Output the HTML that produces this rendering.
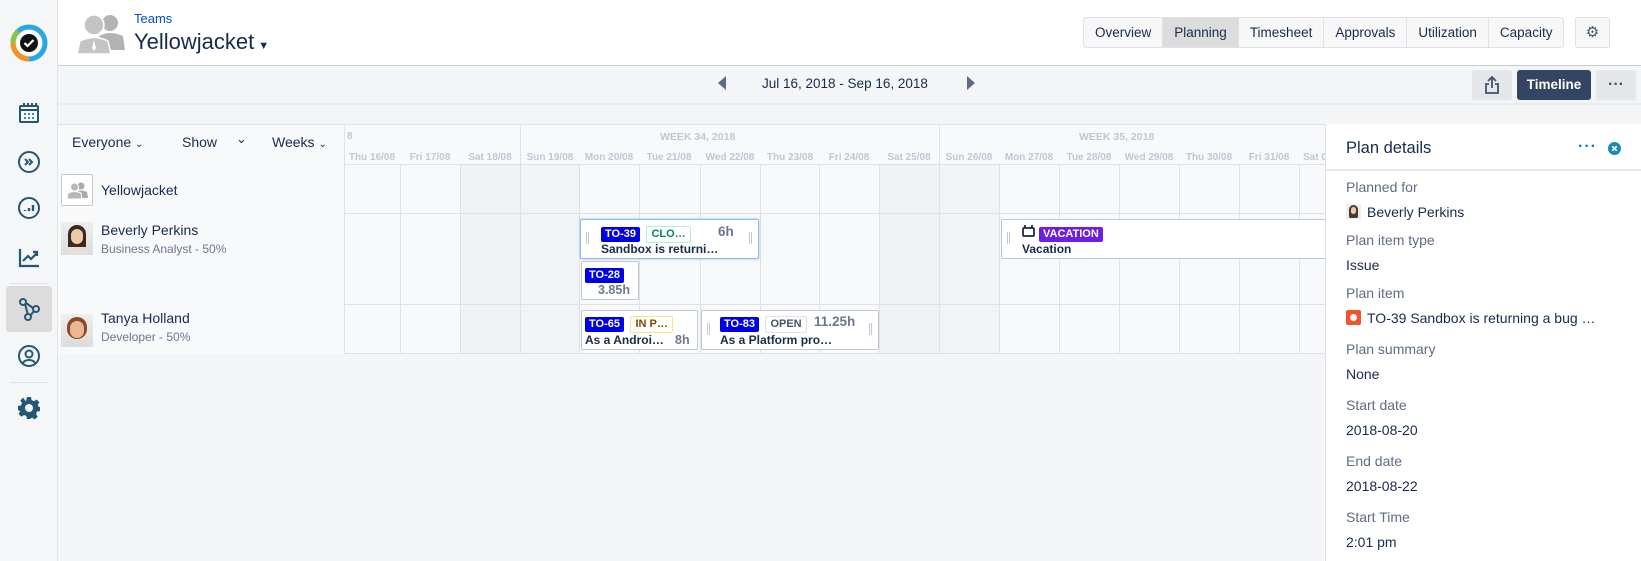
<!DOCTYPE html>
<html><head><meta charset="utf-8"><style>
*{box-sizing:border-box;margin:0;padding:0}
body{width:1641px;height:561px;overflow:hidden;background:#f4f5f7;font-family:"Liberation Sans",Arial,sans-serif;color:#172b4d;position:relative}
.a{position:absolute}
.side{left:0;top:0;width:58px;height:561px;background:#f4f6f8;border-right:1px solid #e1e4e8}
.ic{position:absolute;left:17px;width:24px;height:24px}
.hdr{left:58px;top:0;width:1583px;height:66px;background:#fff;border-bottom:1px solid #c9ccd1}
.tabs{left:1083px;top:17px;height:31px;display:flex;border:1px solid #dfe1e6;border-radius:3px;background:#f7f7f7}
.tabs div{padding:0 11px;line-height:29px;font-size:13.5px;border-right:1px solid #dfe1e6;color:#172b4d}
.tabs div.on{background:#dcdcdc}
.btn{border-radius:3px;background:#e4e6ea;height:30px;top:70px}
.grid{left:58px;top:124px;width:1267px;height:229px;background:#f8f9fb;border-top:1px solid #dfe1e6}
.col{position:absolute;top:40px;bottom:0;border-left:1px solid #dfe1e6}
.dl{position:absolute;top:27px;font-size:10px;font-weight:bold;color:#c1c7d0;width:60px;text-align:center}
.hl{position:absolute;left:0;height:1px;background:#dfe1e6}
.card{position:absolute;background:#fff;border:1px solid #c1c7d0;border-radius:2px}
.tag{display:inline-block;font-size:11px;font-weight:bold;border-radius:2px;padding:1px 4px;line-height:13px}
.blue{background:#0000e6;color:#fff}
.b{font-size:12px;font-weight:bold;color:#172b4d}
.h{font-weight:bold;color:#6b778c;font-size:13px}
.grip{position:absolute;top:12px;width:3px;height:12px;border-left:1px solid #c1c7d0;border-right:1px solid #c1c7d0}
.panel{left:1325px;top:124px;width:316px;height:437px;background:#fff;border-left:1px solid #dfe1e6}
.lb{position:absolute;left:20px;font-size:14px;color:#5e6c84}
.vl{position:absolute;left:20px;font-size:14px;color:#172b4d}
</style></head><body>
<div class="a side">
  <svg class="a" style="left:10px;top:24px" width="38" height="38" viewBox="0 0 38 38"><circle cx="19" cy="19" r="16" fill="none" stroke="#29a8e0" stroke-width="5"/><path d="M19 35 A16 16 0 0 1 3 19" fill="none" stroke="#f7931e" stroke-width="5"/><path d="M3 19 A16 16 0 0 1 8 7" fill="none" stroke="#8dc63f" stroke-width="5"/><circle cx="19" cy="19" r="12" fill="#fff"/><circle cx="19" cy="19" r="9" fill="#111"/><path d="M14.5 19 l3 3 l6-6" fill="none" stroke="#fff" stroke-width="2.2"/></svg>
  <svg class="ic" style="top:101px" viewBox="0 0 24 24" fill="none" stroke="#245872" stroke-width="2"><rect x="3" y="5" width="18" height="16" rx="1"/><path d="M3 9h18M7 2v4M11 2v4M15 2v4M19 2v4"/><path d="M7 13h2M11 13h2M15 13h2M7 17h2M11 17h2M15 17h2" stroke-width="1.6"/></svg>
  <svg class="ic" style="top:150px" viewBox="0 0 24 24" fill="none" stroke="#245872" stroke-width="2"><circle cx="12" cy="12" r="10"/><path d="M8 9l3 3-3 3M12 9l3 3-3 3"/></svg>
  <svg class="ic" style="top:196px" viewBox="0 0 24 24" fill="none" stroke="#245872" stroke-width="2"><circle cx="12" cy="12" r="10"/><path d="M8 15v-1M12 15v-3M16 15v-6" stroke-width="2.4"/></svg>
  <svg class="ic" style="top:245px" viewBox="0 0 24 24" fill="none" stroke="#245872" stroke-width="2.2"><path d="M3 4v17h19"/><path d="M6 16l5-5 3 3 6-6M16 7h4v4"/></svg>
  <div class="a" style="left:10px;top:283px;width:38px;height:1px;background:#dfe1e6"></div>
  <div class="a" style="left:6px;top:286px;width:46px;height:46px;background:#dcdcdc;border-radius:3px"></div>
  <svg class="ic" style="top:297px" viewBox="0 0 24 24" fill="none" stroke="#245872" stroke-width="2"><circle cx="6" cy="5" r="3"/><circle cx="19" cy="12" r="3"/><circle cx="11" cy="20" r="3"/><path d="M8 7l3 11M9 6l7 5M13 19l4-5"/></svg>
  <svg class="ic" style="top:344px" viewBox="0 0 24 24" fill="none" stroke="#245872" stroke-width="2"><circle cx="12" cy="12" r="10"/><circle cx="12" cy="10" r="3.5"/><path d="M6 19c2-4 10-4 12 0"/></svg>
  <div class="a" style="left:10px;top:382px;width:38px;height:1px;background:#dfe1e6"></div>
  <svg class="ic" style="top:396px" viewBox="0 0 24 24"><path fill="#245872" d="M10 1h4l.6 3 2.4 1.2 2.6-1.7 2.8 2.8-1.7 2.6L21.9 11 23 11v4l-3 .6-1 2.4 1.7 2.6-2.8 2.8-2.6-1.7-2.4 1L14 23h-4l-.6-3-2.4-1-2.6 1.7-2.8-2.8L3.3 15 2 14.6 1 14v-4l3-.6 1-2.4-1.7-2.6 2.8-2.8L8.7 5.3 9.4 4z"/><circle cx="12" cy="12" r="4" fill="#f4f6f8"/></svg>
</div>

<div class="a hdr">
  <svg class="a" style="left:17px;top:12px" width="52" height="42" viewBox="0 0 52 42"><circle cx="35" cy="11" r="8" fill="#b3b3b3"/><path d="M24 24 Q35 18 48 24 L50 38 L30 38Z" fill="#b3b3b3"/><circle cx="19" cy="13" r="10" fill="#c4c4c4" stroke="#fff" stroke-width="1.5"/><path d="M2 42 L5 29 Q19 22 33 29 L36 42Z" fill="#c4c4c4" stroke="#fff" stroke-width="1.5"/><path d="M19 28 l-2 8 2 3 2-3z" fill="#fff"/></svg>
  <div class="a" style="left:76px;top:11px;font-size:13px;color:#0052cc">Teams</div>
  <div class="a" style="left:76px;top:29px;font-size:22px;color:#172b4d">Yellowjacket<span style="font-size:11px;margin-left:4px">▼</span></div>
</div>
<div class="a tabs"><div>Overview</div><div class="on">Planning</div><div>Timesheet</div><div>Approvals</div><div>Utilization</div><div style="border-right:0">Capacity</div></div>
<div class="a" style="left:1575px;top:17px;width:35px;height:31px;border:1px solid #dfe1e6;border-radius:3px;background:#f7f7f7;text-align:center;line-height:29px;font-size:15px;color:#42526e">⚙</div>

<div class="a" style="left:718px;top:76px;width:0;height:0;border-top:7px solid transparent;border-bottom:7px solid transparent;border-right:8px solid #5e6c84"></div>
<div class="a" style="left:762px;top:76px;font-size:13.5px;color:#172b4d">Jul 16, 2018 - Sep 16, 2018</div>
<div class="a" style="left:967px;top:76px;width:0;height:0;border-top:7px solid transparent;border-bottom:7px solid transparent;border-left:8px solid #5e6c84"></div>
<div class="a btn" style="left:1472px;width:40px"><svg style="position:absolute;left:12px;top:6px" width="16" height="18" viewBox="0 0 16 18" fill="none" stroke="#42526e" stroke-width="1.8"><path d="M8 12V2M4 5l4-4 4 4M5 8H2v9h12V8h-3"/></svg></div>
<div class="a btn" style="left:1517px;width:74px;background:#344563;color:#fff;font-weight:bold;font-size:13.5px;text-align:center;line-height:30px">Timeline</div>
<div class="a btn" style="left:1596px;width:40px;text-align:center;line-height:30px;font-weight:bold;color:#42526e">···</div>
<div class="a" style="left:58px;top:103px;width:1583px;height:2px;background:#e9ebee"></div>

<div class="a grid">
  <div class="a" style="left:0;top:0;width:287px;height:229px;background:#f8f9fb;border-right:1px solid #dfe1e6;z-index:2">
    <div class="a" style="left:14px;top:9px;font-size:14px">Everyone <span style="font-size:10px">⌄</span></div>
    <div class="a" style="left:124px;top:9px;font-size:14px">Show</div><div class="a" style="left:178px;top:6px;font-size:13px">⌄</div>
    <div class="a" style="left:214px;top:9px;font-size:14px">Weeks <span style="font-size:10px">⌄</span></div>
    <div class="a" style="left:3px;top:49px;width:32px;height:32px;border:1px solid #c1c7d0;border-radius:2px;background:#fff"><svg style="position:absolute;left:5px;top:6px" width="21" height="18" viewBox="0 0 21 18"><circle cx="14" cy="5" r="3.5" fill="#aaa"/><path d="M9 11 Q14 8 20 11 L21 17 L11 17Z" fill="#aaa"/><circle cx="7.5" cy="6" r="4" fill="#b8b8b8" stroke="#fff"/><path d="M0 18 L1 12 Q7.5 9 14 12 L15 18Z" fill="#b8b8b8" stroke="#fff"/></svg></div>
    <div class="a" style="left:43px;top:57px;font-size:14px">Yellowjacket</div>
    <div class="a" style="left:3px;top:97px;width:32px;height:33px;background:linear-gradient(#eee,#ddd)"><div class="a" style="left:7px;top:3px;width:18px;height:26px;border-radius:9px 9px 4px 4px;background:#3a2a20"></div><div class="a" style="left:10px;top:7px;width:12px;height:15px;border-radius:6px;background:#f0c9a8"></div><div class="a" style="left:6px;top:25px;width:20px;height:8px;background:#e8e0d8"></div></div>
    <div class="a" style="left:43px;top:97px;font-size:14px">Beverly Perkins</div>
    <div class="a" style="left:43px;top:117px;font-size:12px;color:#6b778c">Business Analyst - 50%</div>
    <div class="a" style="left:3px;top:189px;width:32px;height:33px;background:linear-gradient(#eee,#ddd)"><div class="a" style="left:6px;top:3px;width:20px;height:22px;border-radius:10px;background:#8a4a2a"></div><div class="a" style="left:9px;top:7px;width:14px;height:17px;border-radius:7px;background:#eab791"></div><div class="a" style="left:5px;top:26px;width:22px;height:7px;background:#ddd"></div></div>
    <div class="a" style="left:43px;top:185px;font-size:14px">Tanya Holland</div>
    <div class="a" style="left:43px;top:205px;font-size:12px;color:#6b778c">Developer - 50%</div>
  </div>
  <div class="a" style="left:402px;top:40px;width:60px;height:189px;background:#eff2f4"></div>
  <div class="a" style="left:462px;top:40px;width:60px;height:189px;background:#f1f4f6"></div>
  <div class="a" style="left:821px;top:40px;width:60px;height:189px;background:#eff2f4"></div>
  <div class="a" style="left:881px;top:40px;width:60px;height:189px;background:#f1f4f6"></div>
  <div class="col" style="left:342px"></div><div class="col" style="left:402px"></div>
  <div class="col" style="left:462px;top:0"></div><div class="col" style="left:521px"></div><div class="col" style="left:581px"></div><div class="col" style="left:642px"></div><div class="col" style="left:702px"></div><div class="col" style="left:761px"></div><div class="col" style="left:821px"></div>
  <div class="col" style="left:881px;top:0"></div><div class="col" style="left:941px"></div><div class="col" style="left:1001px"></div><div class="col" style="left:1061px"></div><div class="col" style="left:1121px"></div><div class="col" style="left:1181px"></div><div class="col" style="left:1241px"></div>
  <div class="hl" style="top:39px;width:1267px"></div>
  <div class="hl" style="top:88px;width:1267px"></div>
  <div class="hl" style="top:179px;width:1267px"></div>
  <div class="hl" style="top:228px;width:1267px"></div>
  <div class="a" style="left:289px;top:6px;font-size:10px;font-weight:bold;color:#c1c7d0;z-index:3">8</div>
  <div class="a h" style="left:602px;top:6px;font-size:10.5px;color:#c1c7d0">WEEK 34, 2018</div>
  <div class="a h" style="left:1021px;top:6px;font-size:10.5px;color:#c1c7d0">WEEK 35, 2018</div>
  <div class="dl" style="left:284px;z-index:3">Thu 16/08</div><div class="dl" style="left:342px">Fri 17/08</div><div class="dl" style="left:402px">Sat 18/08</div><div class="dl" style="left:462px">Sun 19/08</div><div class="dl" style="left:521px">Mon 20/08</div><div class="dl" style="left:581px">Tue 21/08</div><div class="dl" style="left:642px">Wed 22/08</div><div class="dl" style="left:702px">Thu 23/08</div><div class="dl" style="left:761px">Fri 24/08</div><div class="dl" style="left:821px">Sat 25/08</div><div class="dl" style="left:881px">Sun 26/08</div><div class="dl" style="left:941px">Mon 27/08</div><div class="dl" style="left:1001px">Tue 28/08</div><div class="dl" style="left:1061px">Wed 29/08</div><div class="dl" style="left:1121px">Thu 30/08</div><div class="dl" style="left:1181px">Fri 31/08</div><div class="dl" style="left:1241px;text-align:left;padding-left:4px">Sat 01/09</div>

  <div class="card" style="left:522px;top:94px;width:179px;height:40px;border-color:#8fbcef;box-shadow:0 0 2px #8fbcef">
    <div class="grip" style="left:5px"></div><div class="grip" style="left:168px"></div>
    <div class="a" style="left:20px;top:4px"><span class="tag blue">TO-39</span> <span class="tag" style="border:1px solid #abf5d1;color:#00875a;margin-left:2px">CLO…</span></div>
    <div class="a h" style="left:137px;top:4px;font-size:13.5px">6h</div>
    <div class="a b" style="left:20px;top:22px">Sandbox is returni…</div>
  </div>
  <div class="card" style="left:523px;top:136px;width:58px;height:39px">
    <div class="a" style="left:3px;top:3px"><span class="tag blue">TO-28</span></div>
    <div class="a h" style="left:16px;top:21px;font-size:12.5px">3.85h</div>
  </div>
  <div class="card" style="left:523px;top:185px;width:117px;height:40px">
    <div class="a" style="left:3px;top:3px"><span class="tag blue">TO-65</span> <span class="tag" style="border:1px solid #ffe380;color:#7a4b00;margin-left:2px">IN P…</span></div>
    <div class="a b" style="left:3px;top:22px">As a Androi…</div>
    <div class="a h" style="left:93px;top:22px;font-size:12.5px">8h</div>
  </div>
  <div class="card" style="left:643px;top:185px;width:178px;height:40px">
    <div class="grip" style="left:5px"></div><div class="grip" style="left:167px"></div>
    <div class="a" style="left:18px;top:3px"><span class="tag blue">TO-83</span> <span class="tag" style="border:1px solid #dfe1e6;color:#42526e;margin-left:2px">OPEN</span></div>
    <div class="a h" style="left:112px;top:3px;font-size:13.5px">11.25h</div>
    <div class="a b" style="left:18px;top:22px">As a Platform pro…</div>
  </div>
  <div class="card" style="left:943px;top:94px;width:330px;height:40px">
    <div class="grip" style="left:5px"></div>
    <svg class="a" style="left:20px;top:5px" width="13" height="12" viewBox="0 0 13 12" fill="none" stroke="#172b4d" stroke-width="1.8"><rect x="1" y="3" width="11" height="8" rx="1"/><path d="M3 0v3M10 0v3"/></svg>
    <div class="a" style="left:37px;top:4px"><span class="tag" style="background:#6d1ee0;color:#fff">VACATION</span></div>
    <div class="a b" style="left:20px;top:22px">Vacation</div>
  </div>
</div>

<div class="a panel">
  <div class="a" style="left:20px;top:15px;font-size:16.5px;color:#172b4d">Plan details</div>
  <div class="a" style="left:252px;top:14px;font-size:16px;font-weight:bold;color:#0a7fb5;letter-spacing:1px">···</div>
  <svg class="a" style="left:282px;top:18px" width="13" height="13" viewBox="0 0 13 13"><circle cx="6.5" cy="6.5" r="6.5" fill="#1a8bb8"/><path d="M4.3 4.3l4.4 4.4M8.7 4.3l-4.4 4.4" stroke="#fff" stroke-width="1.7"/></svg>
  <div class="a" style="left:0;top:45px;width:316px;height:2px;background:#e6e8eb"></div>
  <div class="lb" style="top:55px">Planned for</div>
  <div class="a" style="left:20px;top:80px;width:15px;height:15px;background:#eee"><div class="a" style="left:3px;top:1px;width:9px;height:13px;border-radius:5px 5px 2px 2px;background:#4a3a30"></div><div class="a" style="left:5px;top:3px;width:5px;height:7px;border-radius:3px;background:#f0c9a8"></div></div>
  <div class="vl" style="left:41px;top:80px">Beverly Perkins</div>
  <div class="lb" style="top:108px">Plan item type</div>
  <div class="vl" style="top:133px">Issue</div>
  <div class="lb" style="top:161px">Plan item</div>
  <div class="a" style="left:20px;top:186px;width:15px;height:15px;background:#f2542d;border-radius:2px"><div class="a" style="left:4px;top:4px;width:7px;height:7px;border-radius:50%;background:#fff"></div></div>
  <div class="vl" style="left:41px;top:186px">TO-39 Sandbox is returning a bug …</div>
  <div class="lb" style="top:217px">Plan summary</div>
  <div class="vl" style="top:242px">None</div>
  <div class="lb" style="top:273px">Start date</div>
  <div class="vl" style="top:298px">2018-08-20</div>
  <div class="lb" style="top:329px">End date</div>
  <div class="vl" style="top:354px">2018-08-22</div>
  <div class="lb" style="top:385px">Start Time</div>
  <div class="vl" style="top:410px">2:01 pm</div>
</div>
</body></html>
